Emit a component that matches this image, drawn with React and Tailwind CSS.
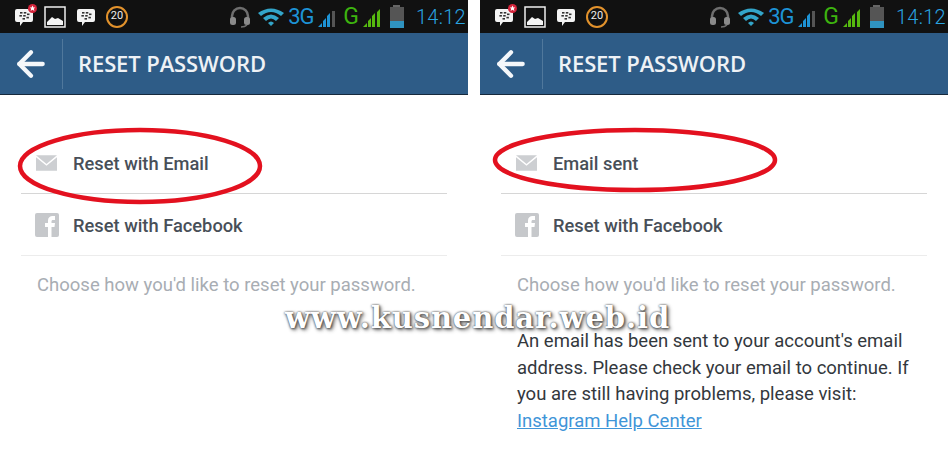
import React from "react";
import { ArrowLeft } from "lucide-react";

const BbmIcon = ({ badge }) => (
  <div className="relative w-[20px] h-[20px]">
    <svg width="20" height="20" viewBox="0 0 20 20">
      <path d="M3 2h14a2 2 0 0 1 2 2v9a2 2 0 0 1-2 2H9l-3 4v-4H3a2 2 0 0 1-2-2V4a2 2 0 0 1 2-2z" fill="#f4f4f4" />
      <g fill="#333">
        <rect x="6" y="5" width="2.5" height="1.6" />
        <rect x="9.8" y="5" width="2.5" height="1.6" />
        <rect x="5.4" y="8" width="2.5" height="1.6" />
        <rect x="9.2" y="8" width="2.5" height="1.6" />
        <rect x="13" y="6.5" width="2.5" height="1.6" />
        <rect x="8.5" y="11" width="2.5" height="1.6" />
        <rect x="12.4" y="9.8" width="2.5" height="1.6" />
      </g>
    </svg>
    {badge && (
      <svg className="absolute top-[-3px] right-[-3px]" width="9" height="9" viewBox="0 0 9 9">
        <circle cx="4.5" cy="4.5" r="4.5" fill="#d4233a" />
        <path d="M4.500 1.500l.9 2h2l-1.600 1.300.6 2.100-1.900-1.200-1.900 1.200.6-2.100L1.600 3.500h2z" fill="#fff" />
      </svg>
    )}
  </div>
);

const StatusBar = () => (
  <div className="h-[33px] bg-[#111111] flex items-center pl-[14px] pr-[2px]">
    <BbmIcon badge />
    <svg className="ml-[10px]" width="22" height="22" viewBox="0 0 22 22">
      <rect x="1" y="1" width="20" height="20" fill="#111" stroke="#eeeeee" strokeWidth="1.5" />
      <path d="M3 19v-3l5-5 3 2 3-1 5 3v4z" fill="#f4f4f4" />
    </svg>
    <div className="ml-[10px]">
      <BbmIcon />
    </div>
    <div className="ml-[10px] w-[22px] h-[22px] rounded-full border-2 border-[#e2922c] flex items-center justify-center text-[11px] text-[#eeeeee] font-['Roboto',sans-serif]">
      20
    </div>
    <div className="ml-auto flex items-center">
      <svg width="24" height="24" viewBox="0 0 24 24">
        <path d="M4 15v-4a8 8 0 0 1 16 0v4" fill="none" stroke="#6e6e6e" strokeWidth="2.5" />
        <rect x="2" y="12" width="6" height="8" rx="2.5" fill="#8a8a8a" />
        <rect x="16" y="12" width="6" height="8" rx="2.5" fill="#8a8a8a" />
        <path d="M19 20q-2 2-6 2" fill="none" stroke="#6e6e6e" strokeWidth="1.5" />
      </svg>
      <svg className="ml-[6px]" width="26" height="20" viewBox="0 0 26 20">
        <path d="M0 6Q13-3 26 6l-3 3Q13 1 3 9z" fill="#33a5c9" />
        <path d="M5 11Q13 4 21 11l-3 3Q13 9 8 14z" fill="#33a5c9" />
        <path d="M10 16Q13 13 16 16l-3 3z" fill="#33a5c9" />
      </svg>
      <span className="ml-[4px] w-[26px] text-[22px] leading-none text-[#1d93d6] font-['Roboto',sans-serif] tracking-[-1px]">3G</span>
      <svg className="ml-[3px]" width="20" height="22" viewBox="0 0 20 22">
        <path d="M1 21l4-4v4zM6 21v-6l3-3v9zM10 21V10l3-3v14z" fill="#1d93d6" />
        <rect x="15" y="5" width="3" height="16" fill="#555" />
      </svg>
      <span className="ml-[6px] text-[23px] leading-none text-[#3db30f] font-['Roboto',sans-serif]">G</span>
      <svg className="ml-[3px]" width="20" height="22" viewBox="0 0 20 22">
        <path d="M1 21l4-4v4zM6 21v-6l3-3v9zM10 21V10l3-3v14zM15 21V6l3-3v18z" fill="#56b80f" />
      </svg>
      <div className="ml-[8px] w-[14px] h-[23px] flex flex-col items-center">
        <div className="w-[7px] h-[2px] bg-[#666]" />
        <div className="w-[14px] flex-1 bg-[#555] flex flex-col justify-end">
          <div className="h-[7px] bg-[#2f93c0]" />
        </div>
      </div>
      <span className="ml-[12px] text-[20px] leading-none text-[#2aa4e0] font-['Roboto',sans-serif] font-light tracking-[0.3px]">14:12</span>
    </div>
  </div>
);

const Header = () => (
  <div className="h-[62px] bg-[#2e5c87] border-b border-[#16293c] flex items-center">
    <div className="w-[63px] h-[50px] flex items-center justify-center border-r border-[#50789c]">
      <ArrowLeft className="text-[#f4f7fa]" size={40} strokeWidth={2.6} />
    </div>
    <span className="ml-[15px] text-[22px] font-semibold text-[#eef2f6] font-['Open_Sans',sans-serif] tracking-[-0.1px]">
      RESET PASSWORD
    </span>
  </div>
);

const Row = ({ icon, label, border }) => (
  <div className={`h-[62px] flex items-center pt-[1px] ${border}`}>
    <div className="w-[52px] pl-[14px] flex items-center">{icon}</div>
    <span className="mt-[2px] text-[18.3px] font-medium text-[#484f58] font-['Roboto',sans-serif]">{label}</span>
  </div>
);

const MailIcon = () => (
  <svg className="ml-[1px]" width="21" height="16" viewBox="0 0 22 16">
    <path d="M0 0h22L11 9z" fill="#cdcfd2" />
    <path d="M0 2l11 9 11-9v14H0z" fill="#cdcfd2" />
  </svg>
);

const FacebookIcon = () => (
  <svg width="24" height="24" viewBox="0 0 24 24">
    <rect width="24" height="24" rx="2" fill="#c6c8cb" />
    <path d="M13 24v-10h-3v-4h3V7.500C13 4.500 15 3 17.500 3H20v4h-2c-1 0-1.500.5-1.500 1.500V10H20l-.5 4h-3v10z" fill="#fff" />
  </svg>
);

// hand drawn marker ring around the first row
const Ring = ({ rx, ry, left }) => (
  <svg
    className={`absolute top-[126px] ${left}`}
    width={2 * rx + 10}
    height={2 * ry + 8}
    viewBox={`0 0 ${2 * rx + 10} ${2 * ry + 8}`}
  >
    <ellipse cx={rx + 5} cy={ry + 4} rx={rx} ry={ry} fill="none" stroke="#e3111f" strokeWidth="4.5" />
  </svg>
);

const Panel = ({ first, ring, children }) => (
  <div className="relative w-[468px] h-[468px] bg-white">
    <StatusBar />
    <Header />
    <div className="px-[21px] pt-[37px]">
      <Row icon={<MailIcon />} label={first} border="border-b border-[#d6d6d6]" />
      <Row icon={<FacebookIcon />} label="Reset with Facebook" border="border-b border-[#ececec]" />
      <p className="mt-[17px] pl-[16px] text-[18.5px] leading-[24px] text-[#a8adb3] font-['Roboto',sans-serif]">
        Choose how you'd like to reset your password.
      </p>
      {children}
    </div>
    {ring}
  </div>
);

export default function App() {
  return (
    <div className="relative w-[948px] h-[468px] overflow-hidden bg-white flex gap-[12px]">
      <Panel first="Reset with Email" ring={<Ring rx={120} ry={36} left="left-[15px]" />} />
      <Panel first="Email sent" ring={<Ring rx={140} ry={30} left="left-[10px]" />}>
        <p className="mt-[31px] pl-[16px] text-[18.5px] leading-[26.500px] text-[#33383d] font-['Roboto',sans-serif]">
          An email has been sent to your account's email address. Please check your email to continue. If you are still having problems, please visit:{" "}
          <span className="text-[#3f95d8] underline">Instagram Help Center</span>
        </p>
      </Panel>
      <div className="absolute left-[285px] top-[300px] text-[29px] leading-[36px] tracking-[0.9px] font-bold text-white font-['DejaVu_Serif',serif] [text-shadow:0_0_2px_#444,1px_1px_3px_#555,2px_2px_4px_#888] whitespace-nowrap">
        www.kusnendar.web.id
      </div>
    </div>
  );
}
